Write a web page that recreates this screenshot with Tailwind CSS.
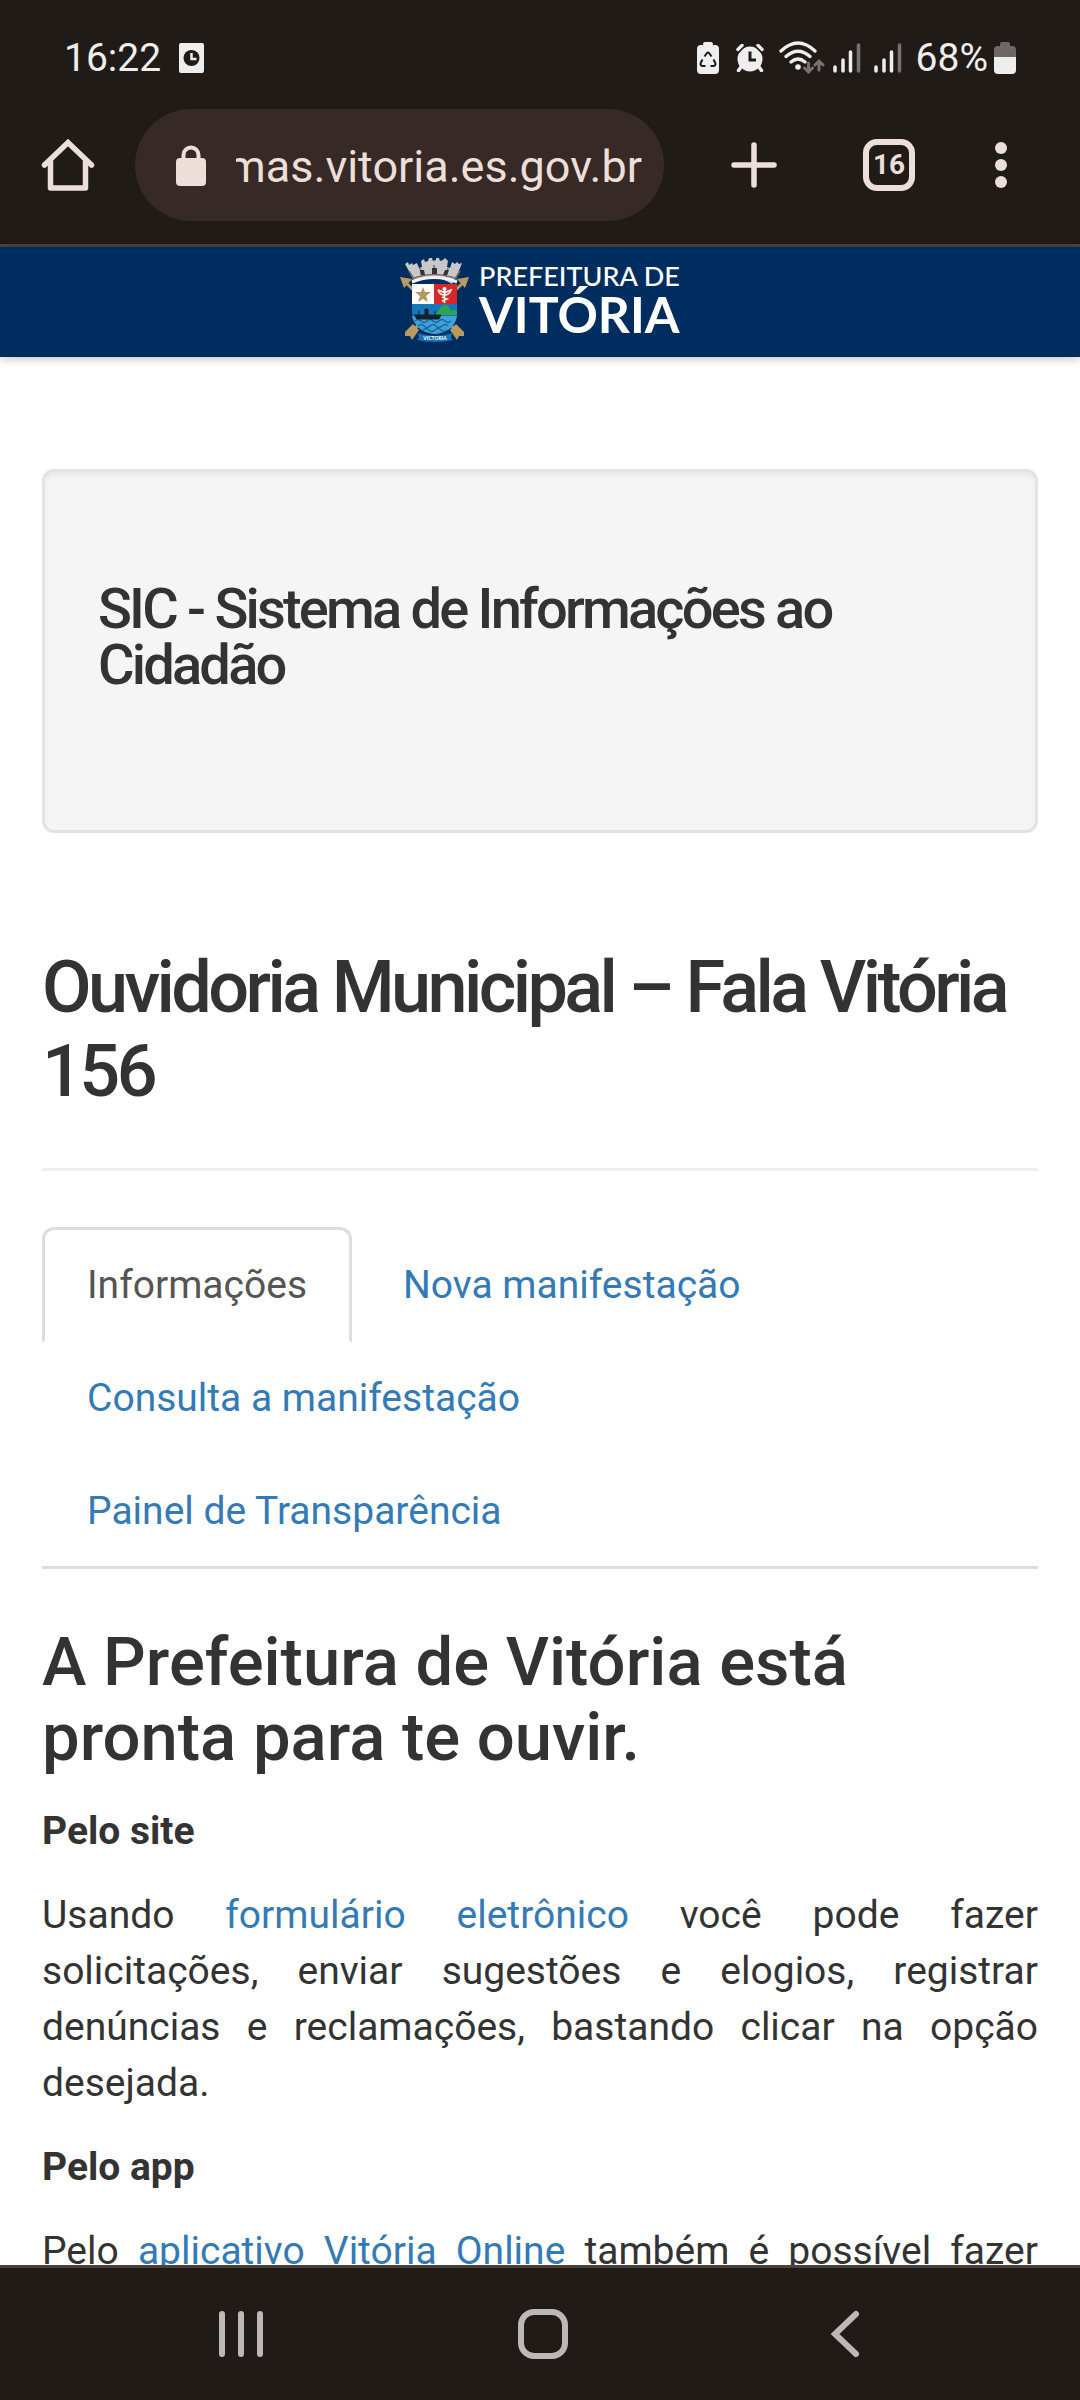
<!DOCTYPE html>
<html lang="pt-BR">
<head>
<meta charset="utf-8">
<meta name="viewport" content="width=device-width, initial-scale=1">
<title>Ouvidoria Municipal – Fala Vitória 156</title>
<script src="https://cdn.jsdelivr.net/npm/@tailwindcss/browser@4"></script>
</head>
<body class="flex h-screen flex-col bg-white font-['Roboto',sans-serif] text-[39px] leading-[56px] text-[#333333]">

<!-- Status bar -->
<div class="flex h-[109px] shrink-0 items-center bg-[#211b18] pt-[7px] pr-16 pl-16 leading-none text-[#eeeeee]">
  <span>16:22</span>
  <svg class="ml-[18px] h-[30px] w-[25px]" viewBox="0 0 25 30" aria-hidden="true">
    <rect width="25" height="30" rx="2" fill="#eee"/><circle cx="12.500" cy="15" r="8" fill="#211b18"/><path d="M12.500 10v6h5" fill="none" stroke="#eee" stroke-width="2.500"/>
  </svg>
  <div class="ml-auto flex items-center">
    <svg class="h-8 w-[22px]" viewBox="0 0 22 32" aria-hidden="true">
      <path d="M6 3V2a2 2 0 0 1 2-2h6a2 2 0 0 1 2 2v1h2a4 4 0 0 1 4 4v21a4 4 0 0 1-4 4H4a4 4 0 0 1-4-4V7a4 4 0 0 1 4-4z" fill="#eee"/>
      <path d="M7.500 14.500 10 11q1-1 2 0l2.500 3.500M16.500 17.500l1.800 3.500q.8 2.500-1.800 3h-3M5.500 17.500 3.700 21q-.8 2.500 1.800 3h3" fill="none" stroke="#211b18" stroke-width="2"/>
    </svg>
    <svg class="ml-[17px] h-7 w-7" viewBox="0 0 28 28" aria-hidden="true">
      <circle cx="14" cy="15" r="12.500" fill="#eee"/><path d="M2 5.500 6 1.500M26 5.500l-4-4M5 23l-2.500 3.500M23 23l2.500 3.500" stroke="#eee" stroke-width="3.500" stroke-linecap="round"/><path d="M2 9 9 2M26 9l-7-7" stroke="#211b18" stroke-width="1.500"/><path d="M14 7.500V16h6" fill="none" stroke="#211b18" stroke-width="3"/>
    </svg>
    <svg class="ml-[15px] h-[34px] w-[46px]" viewBox="0 0 46 34" aria-hidden="true">
      <path d="M2 10Q19-6 36 10M7 15.500Q19 5 31 15.500M12 21Q19 15 26 21" fill="none" stroke="#eee" stroke-width="3.300" stroke-linecap="round"/><circle cx="19" cy="26" r="2.800" fill="#eee"/>
      <path d="M29.500 22v9M25.500 27l4 4 4-4M40 29v-9M36 24l4-4 4 4" fill="none" stroke="#777270" stroke-width="3" stroke-linecap="round"/>
    </svg>
    <svg class="ml-2 h-[30px] w-7" viewBox="0 0 28 30" aria-hidden="true">
      <path d="M2 24v4M10 17v11M17.500 9v19" stroke="#eee" stroke-width="3.500" stroke-linecap="round"/><path d="M25.500 2v26" stroke="#777270" stroke-width="3.500" stroke-linecap="round"/>
    </svg>
    <svg class="ml-[13px] h-[30px] w-7" viewBox="0 0 28 30" aria-hidden="true">
      <path d="M2 24v4M10 17v11M17.500 9v19" stroke="#eee" stroke-width="3.500" stroke-linecap="round"/><path d="M25.500 2v26" stroke="#777270" stroke-width="3.500" stroke-linecap="round"/>
    </svg>
    <span class="ml-[14px]">68%</span>
    <svg class="ml-[6px] h-8 w-[22px]" viewBox="0 0 22 32" aria-hidden="true">
      <path d="M6 4V2a2 2 0 0 1 2-2h6a2 2 0 0 1 2 2v2h2a4 4 0 0 1 4 4v7H0V8a4 4 0 0 1 4-4z" fill="#6d6865"/><path d="M0 15h22v13a4 4 0 0 1-4 4H4a4 4 0 0 1-4-4z" fill="#eee"/>
    </svg>
  </div>
</div>

<!-- Browser toolbar -->
<div class="flex h-[138px] shrink-0 items-start border-b-[3px] border-[#4d403b] bg-[#211b18] pr-[55px] text-[#ecdfda]">
  <button type="button" class="flex h-28 w-[135px] shrink-0 items-center justify-center" aria-label="Página inicial">
    <svg class="h-[54px] w-[54px]" viewBox="0 0 54 54" fill="none" stroke="currentColor" stroke-width="5.500" stroke-linecap="round" stroke-linejoin="round"><path d="M3.500 27 27 4.500 50.500 27" stroke-linejoin="miter"/><path d="M9.500 23v27h35V23"/></svg>
  </button>
  <div class="flex h-28 min-w-0 flex-1 items-center rounded-full bg-[#372925] pr-[22px] pl-[41px]">
    <svg class="h-[41px] w-[30px] shrink-0" viewBox="0 0 30 41" aria-hidden="true"><rect y="13" width="30" height="28" rx="4" fill="currentColor"/><path d="M7.500 15V10a7.500 7.500 0 0 1 15 0v5" fill="none" stroke="currentColor" stroke-width="4"/></svg>
    <div class="ml-[30px] flex min-w-0 flex-1 justify-end overflow-hidden pt-[3px] text-[45px] leading-[60px]"><span class="whitespace-nowrap">sistemas.vitoria.es.gov.br</span></div>
  </div>
  <button type="button" class="ml-[58px] flex h-28 w-16 shrink-0 items-center justify-center" aria-label="Nova guia">
    <svg class="h-12 w-12" viewBox="0 0 48 48" stroke="currentColor" stroke-width="5.500" stroke-linecap="round"><path d="M24 4v40M4 24h40"/></svg>
  </button>
  <button type="button" class="ml-[71px] flex h-28 w-16 shrink-0 items-center justify-center" aria-label="16 guias abertas">
    <span class="flex h-[52px] w-[52px] items-center justify-center rounded-[14px] border-[6px] border-[#ecdfda] text-[28px] leading-none font-bold">16</span>
  </button>
  <button type="button" class="ml-14 flex h-28 w-12 shrink-0 items-center justify-center" aria-label="Mais opções">
    <svg class="h-12 w-3" viewBox="0 0 12 48" fill="currentColor"><circle cx="6" cy="7" r="6"/><circle cx="6" cy="24" r="6"/><circle cx="6" cy="41" r="6"/></svg>
  </button>
</div>

<!-- Municipal header -->
<header class="relative flex h-[110px] shrink-0 justify-center bg-[#002d5f] pt-[11px] shadow-[0_3px_8px_rgba(0,0,0,0.2)]">
  <a href="#" class="flex gap-[10px] text-white">
    <svg class="h-[84px] w-[69px]" viewBox="0 0 69 84" aria-hidden="true">
      <g stroke="#b99b60" stroke-width="3" stroke-linecap="round"><path d="M4 23 60 76M65 23 9 76"/></g>
      <g fill="#b99b60"><path d="M0 19l12 2-8 9zM69 19l-12 2 8 9z"/><path d="M5 74l8-8 6 6-7 10-2-4-5 0zM64 74l-8-8-6 6 7 10 2-4 5 0z"/></g>
      <path d="M5 6l3-2 1 3 3-2 1 2 4-2 2 5 3-1-1-6 3-2 1 3 3-1 1-3h3l1 3 3-1v-2h3l1 3 3-1 2-2 3 3-1 6 3 1 2-6 3 2 2-2 2 2 3-1-4 10-6 11Q35 15 14 23L10 15z" fill="#c9c7c8"/>
      <path d="M12 21Q34 12 57 21M9 13l5 8M20 10l2 9M34 7v10M48 10l-2 9M60 13l-5 8" fill="none" stroke="#716e70" stroke-width="1.500"/>
      <path d="M20 12h4l1 5h-4zM32 10h5v6h-5zM45 12h4l-2 5h-4z" fill="#353235"/>
      <path d="M12 24Q34 15 57 24" fill="none" stroke="#f0f0f0" stroke-width="3"/>
      <path d="M12 26h45v28q-1 20-22 22-22-2-23-22z" fill="#1777bb"/>
      <path d="M12 26h22v20H12z" fill="#fff"/><path d="M34 26h23v20H34z" fill="#d92627"/>
      <path d="M23 29l2 5h6l-5 4 2 6-5-3-5 3 2-6-5-4h6z" fill="#b5985e"/>
      <path d="M44.500 32v13M38 32q4 1 6.500 3 3-2 6.500-3-2 5-6.500 5T38 32M42 39l5 2-5 2" fill="none" stroke="#fff" stroke-width="1.600"/><circle cx="44.500" cy="31" r="2" fill="#fff"/>
      <path d="M31 57q6-1 8-5 3-5 6-5 4 0 6 6 3-2 6 0v4z" fill="#2fa44f"/>
      <path d="M12 58h45q-3 16-22 18-19-2-23-18z" fill="#3ea2d8"/>
      <path d="M15 63q3-3 6 0t6 0 6 0 6 0 6 0 6 0M18 68q3-3 6 0t6 0 6 0 6 0 6 0M23 72q3-3 6 0t6 0 6 0 6 0" fill="none" stroke="#16649b" stroke-width="1.300"/>
      <path d="M14 57h27l-2 4H17zM25 51h3v6h-3zM19 53v5M35 53v5" fill="#16212c" stroke="#16212c"/>
      <path d="M18 75q17 6 34 0l-1 5 2 2q-18 4-36 0l2-2z" fill="#1872b5"/>
      <text x="35" y="82" fill="#fff" font-family="Lato, sans-serif" font-size="5" font-weight="700" text-anchor="middle">VICTORIA</text>
    </svg>
    <span class="flex flex-col pt-[3px] font-['Lato',sans-serif]">
      <span class="text-[27px] leading-[30px] font-medium">PREFEITURA DE</span>
      <span class="text-[50px] leading-[46px] font-bold">VITÓRIA</span>
    </span>
  </a>
</header>

<main class="min-h-0 flex-1 overflow-hidden px-[42px] pt-28">
  <section class="rounded-xl border-[3px] border-[#e3e3e3] bg-[#f5f5f5] px-[53px] pt-[109px] pb-[137px] shadow-[inset_0_3px_5px_rgba(0,0,0,0.05)]">
    <h3 class="text-[56px] leading-[56px] font-medium tracking-tighter">SIC - Sistema de Informações ao Cidadão</h3>
  </section>

  <h1 class="mt-[113px] border-b-[3px] border-[#eeeeee] pb-[54px] text-[72px] leading-[84px] font-medium tracking-tighter">Ouvidoria Municipal – Fala Vitória 156</h1>

  <nav class="mt-14">
    <ul class="flex flex-wrap gap-x-[6px] border-b-[3px] border-[#dddddd]">
      <li class="-mb-[3px]"><a href="#informacoes" aria-current="page" class="block rounded-t-xl border-[3px] border-[#dddddd] border-b-white bg-white px-[42px] py-[27px] text-[#555555]">Informações</a></li>
      <li class="-mb-[3px]"><a href="#nova" class="block border-[3px] border-transparent px-[42px] py-[27px] text-[#337ab7]">Nova manifestação</a></li>
      <li class="-mb-[3px] w-full"><a href="#consulta" class="inline-block border-[3px] border-transparent px-[42px] py-[27px] text-[#337ab7]">Consulta a manifestação</a></li>
      <li class="-mb-[3px]"><a href="#painel" class="block border-[3px] border-transparent px-[42px] py-[27px] text-[#337ab7]">Painel de Transparência</a></li>
    </ul>
  </nav>

  <article id="informacoes" class="text-justify">
    <h2 class="mt-14 text-left text-[67px] leading-[75px] font-medium">A Prefeitura de Vitória está pronta para te ouvir.</h2>
    <p class="mt-7 font-bold">Pelo site</p>
    <p class="mt-7">Usando <a href="#nova" class="text-[#337ab7]">formulário eletrônico</a> você pode fazer solicitações, enviar sugestões e elogios, registrar denúncias e reclamações, bastando clicar na opção desejada.</p>
    <p class="mt-7 font-bold">Pelo app</p>
    <p class="mt-7">Pelo <a href="#app" class="text-[#337ab7]">aplicativo Vitória Online</a> também é possível fazer solicitações.</p>
  </article>
</main>

<!-- System navigation -->
<div class="grid h-[135px] shrink-0 grid-cols-3 border-t-[3px] border-[#4b423c] bg-[#211b18] pr-[84px] pl-[90px] text-[#bbb8b6]">
  <button type="button" class="flex items-center justify-center" aria-label="Recentes"><svg class="h-12 w-12" viewBox="0 0 48 48" stroke="currentColor" stroke-width="6" stroke-linecap="round"><path d="M5 4v40M24 4v40M43 4v40"/></svg></button>
  <button type="button" class="flex items-center justify-center" aria-label="Início"><svg class="h-[50px] w-[50px]" viewBox="0 0 50 50" fill="none" stroke="currentColor" stroke-width="6"><rect x="3" y="3" width="44" height="44" rx="13"/></svg></button>
  <button type="button" class="flex items-center justify-center" aria-label="Voltar"><svg class="h-12 w-12" viewBox="0 0 48 48" fill="none" stroke="currentColor" stroke-width="6" stroke-linecap="round"><path d="M35 4 14 24l21 20"/></svg></button>
</div>
</body>
</html>
